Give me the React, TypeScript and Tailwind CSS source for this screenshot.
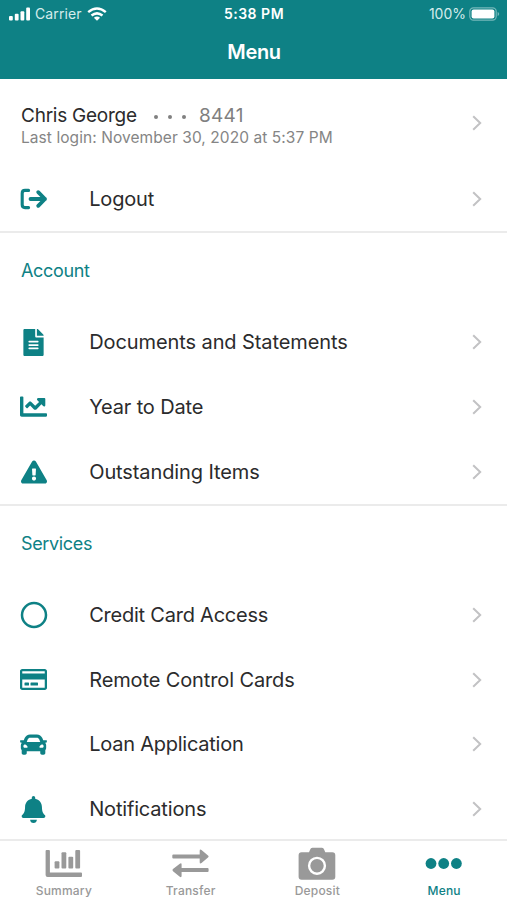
import React from "react";
import {
  FaBell,
  FaCar,
  FaChartLine,
  FaExclamationTriangle,
  FaFileAlt,
  FaRegCreditCard,
} from "react-icons/fa";

interface MenuItem {
  label: string;
  icon: React.ReactNode;
  spacing: string;
}

interface Tab {
  label: string;
  icon: React.ReactNode;
  active?: boolean;
}

const LogoutIcon = () => (
  <svg width="28" height="28" viewBox="0 0 28 28" fill="none" stroke="currentColor" strokeWidth="3.1" strokeLinecap="round" strokeLinejoin="round">
    <path d="M8.6 5.4H5Q2.2 5.4 2.2 8.2V19.8Q2.2 22.6 5 22.6H8.6" />
    <path d="M10.5 14H25M18.2 7.2 25 14l-6.8 6.8" strokeWidth="3.8" />
  </svg>
);

const CircleIcon = () => (
  <svg width="28" height="28" viewBox="0 0 28 28" fill="none" stroke="currentColor" strokeWidth="2.5">
    <circle cx="14" cy="14" r="12" />
  </svg>
);

const Chevron = () => (
  <svg className="shrink-0" width="10" height="16" viewBox="0 0 10 16" fill="none" stroke="#c2c2c4" strokeWidth="2">
    <path d="M1.2 1.2 8.2 8l-7 6.8" />
  </svg>
);

const SummaryIcon = () => (
  <svg width="38" height="34" viewBox="0 0 38 34" fill="currentColor">
    <path d="M2.6 3h2.4q.9 0 .9.9V25.6H37q1 0 1 1v2.4q0 1-1 1H3.6Q1.6 30 1.6 28V3.9Q1.6 3 2.6 3Z" />
    <rect x="10.6" y="14.2" width="4.8" height="7.2" rx="1" />
    <rect x="17.5" y="5.2" width="4.8" height="16.2" rx="1" />
    <rect x="24.4" y="9.8" width="4.8" height="11.6" rx="1" />
    <rect x="31.3" y="3" width="4.8" height="18.4" rx="1" />
  </svg>
);

const TransferIcon = () => (
  <svg width="38" height="34" viewBox="0 0 38 34" fill="currentColor">
    <path d="M2.3 7.4H28.7V4q0-2.2 1.8-.9l6.5 5.4q1.2 1.1 0 2.1L30.5 16.1q-1.8 1.3-1.8-.9v-3.7H2.3q-1 0-1-1v-2.1q0-1 1-1Z" />
    <path d="M36.6 21H10.6v-3.4q0-2.2-1.8-.9l-6.8 5.4q-1.2 1.1 0 2.1l6.8 5.5q1.8 1.3 1.8-.9V25.1h26q1 0 1-1V22q0-1-1-1Z" />
  </svg>
);

const CameraIcon = () => (
  <svg width="38" height="34" viewBox="0 0 38 34">
    <path
      fill="currentColor"
      d="M3.6 5.3H11l1.2-2.9Q12.7.8 14.3.8H24q1.6 0 2.1 1.6l1.2 2.9h7q3 0 3 3V29.8q0 3-3 3H3.6q-3 0-3-3V8.3q0-3 3-3Z"
    />
    <circle cx="19" cy="18.8" r="7.9" fill="none" stroke="white" strokeWidth="2.4" />
  </svg>
);

const DotsIcon = () => (
  <svg width="38" height="34" viewBox="0 0 38 34" fill="currentColor">
    <circle cx="6" cy="16.5" r="5.4" />
    <circle cx="18.7" cy="16.5" r="5.4" />
    <circle cx="31.4" cy="16.5" r="5.4" />
  </svg>
);

const accountItems: MenuItem[] = [
  { label: "Documents and Statements", icon: <FaFileAlt size={27} />, spacing: "tracking-[-0.09px]" },
  { label: "Year to Date", icon: <FaChartLine size={27} />, spacing: "tracking-[-0.16px]" },
  { label: "Outstanding Items", icon: <FaExclamationTriangle size={26} />, spacing: "tracking-[-0.1px]" },
];

const serviceItems: MenuItem[] = [
  { label: "Credit Card Access", icon: <CircleIcon />, spacing: "tracking-[-0.23px]" },
  { label: "Remote Control Cards", icon: <FaRegCreditCard size={27} />, spacing: "tracking-[-0.12px]" },
  { label: "Loan Application", icon: <FaCar size={27} />, spacing: "tracking-[-0.24px]" },
  { label: "Notifications", icon: <FaBell size={27} />, spacing: "tracking-[-0.17px]" },
];

const tabs: Tab[] = [
  { label: "Summary", icon: <SummaryIcon /> },
  { label: "Transfer", icon: <TransferIcon /> },
  { label: "Deposit", icon: <CameraIcon /> },
  { label: "Menu", icon: <DotsIcon />, active: true },
];

const StatusBar = () => (
  <div className="grid h-[27px] grid-cols-3 items-center pl-[9px] pr-[7px] text-[14px]">
    <div className="flex items-center text-[#d5ecec]">
      <svg width="22" height="14" viewBox="0 0 22 14" fill="white">
        <rect x="0" y="9" width="3.8" height="4.4" rx="1" />
        <rect x="5.8" y="6.8" width="3.8" height="6.6" rx="1" />
        <rect x="11.5" y="4.2" width="3.8" height="9.2" rx="1" />
        <rect x="17.2" y="0.6" width="3.8" height="12.8" rx="1" />
      </svg>
      <span className="ml-1 tracking-[0.1px]">Carrier</span>
      <svg className="ml-[5px]" width="20" height="14" viewBox="0 0 20 14" fill="none" stroke="white" strokeWidth="2.5">
        <path d="M1.2 5.1Q10-2.2 18.8 5.1" />
        <path d="M4.5 8.6q5.5-4.4 11 0" />
        <path d="M10 13.8 6.9 10.7q3.1-2.3 6.2 0Z" fill="white" stroke="none" />
      </svg>
    </div>
    <p className="pr-px text-center font-semibold tracking-[0.5px]">5:38 PM</p>
    <div className="flex items-center justify-end text-[#d5ecec]">
      <span>100%</span>
      <svg className="ml-[3px]" width="31" height="14" viewBox="0 0 31 14">
        <rect x="0.8" y="0.8" width="26.4" height="12.4" rx="3.6" fill="none" stroke="#75b8ba" strokeWidth="1.2" />
        <rect x="2.6" y="2.6" width="22.8" height="8.8" rx="2" fill="white" />
        <path d="M28.6 5q1.6.6 1.6 2t-1.6 2Z" fill="#75b8ba" />
      </svg>
    </div>
  </div>
);

const MenuRow: React.FC<{ item: MenuItem }> = ({ item }) => (
  <div className="flex h-[64.7px] items-center pl-[19.8px] pr-[25px]">
    <div className="flex w-7 justify-center text-[#0e8185]">{item.icon}</div>
    <p className={`ml-[41.4px] flex-1 text-[20px] text-[#2b2b2c] ${item.spacing}`}>{item.label}</p>
    <Chevron />
  </div>
);

const Section: React.FC<{ title: string; items: MenuItem[] }> = ({ title, items }) => (
  <section className="border-t-2 border-[#ebebeb]">
    <h2 className="flex h-[76.7px] items-center pb-[2.5px] pl-[21px] text-[18px] tracking-[-0.35px] text-[#0e8185]">
      {title}
    </h2>
    {items.map((item) => (
      <MenuRow key={item.label} item={item} />
    ))}
  </section>
);

export default function App() {
  return (
    <div className="flex h-[900px] w-full flex-col overflow-hidden bg-white font-['Inter',sans-serif]">
      <header className="h-[79px] shrink-0 bg-[#0e8185] text-white">
        <StatusBar />
        <h1 className="mt-[10px] pl-px text-center text-[20px] leading-[30px] font-semibold tracking-[-0.35px]">Menu</h1>
      </header>

      <main className="min-h-0 flex-1 overflow-hidden">
        <div className="flex h-[87.5px] items-center pl-[21px] pr-[25px]">
          <div className="flex-1 pt-[6px]">
            <div className="flex items-center text-[19px] leading-6 text-[#2b2b2c]">
              <span className="tracking-[-0.24px]">Chris George</span>
              <span className="mt-[2px] ml-[17px] flex gap-[10px]">
                <i className="size-1 rounded-full bg-[#808080]" />
                <i className="size-1 rounded-full bg-[#808080]" />
                <i className="size-1 rounded-full bg-[#808080]" />
              </span>
              <span className="ml-[13px] tracking-[0.3px] text-[#808080]">8441</span>
            </div>
            <p className="text-[15.5px] leading-5 tracking-[0.07px] text-[#858585]">Last login: November 30, 2020 at 5:37 PM</p>
          </div>
          <Chevron />
        </div>
        <MenuRow item={{ label: "Logout", icon: <LogoutIcon />, spacing: "tracking-[-0.17px]" }} />
        <Section title="Account" items={accountItems} />
        <Section title="Services" items={serviceItems} />
      </main>

      <nav className="grid h-[61px] shrink-0 grid-cols-4 border-t-2 border-[#ebebeb] bg-white">
        {tabs.map((tab) => (
          <div
            key={tab.label}
            className={`flex flex-col items-center pt-[6px] ${tab.active ? "text-[#0e8185]" : "text-[#999999]"}`}
          >
            {tab.icon}
            <span className="mt-[2px] pl-px text-[12px] leading-4 font-medium tracking-[0.2px]">{tab.label}</span>
          </div>
        ))}
      </nav>
    </div>
  );
}
